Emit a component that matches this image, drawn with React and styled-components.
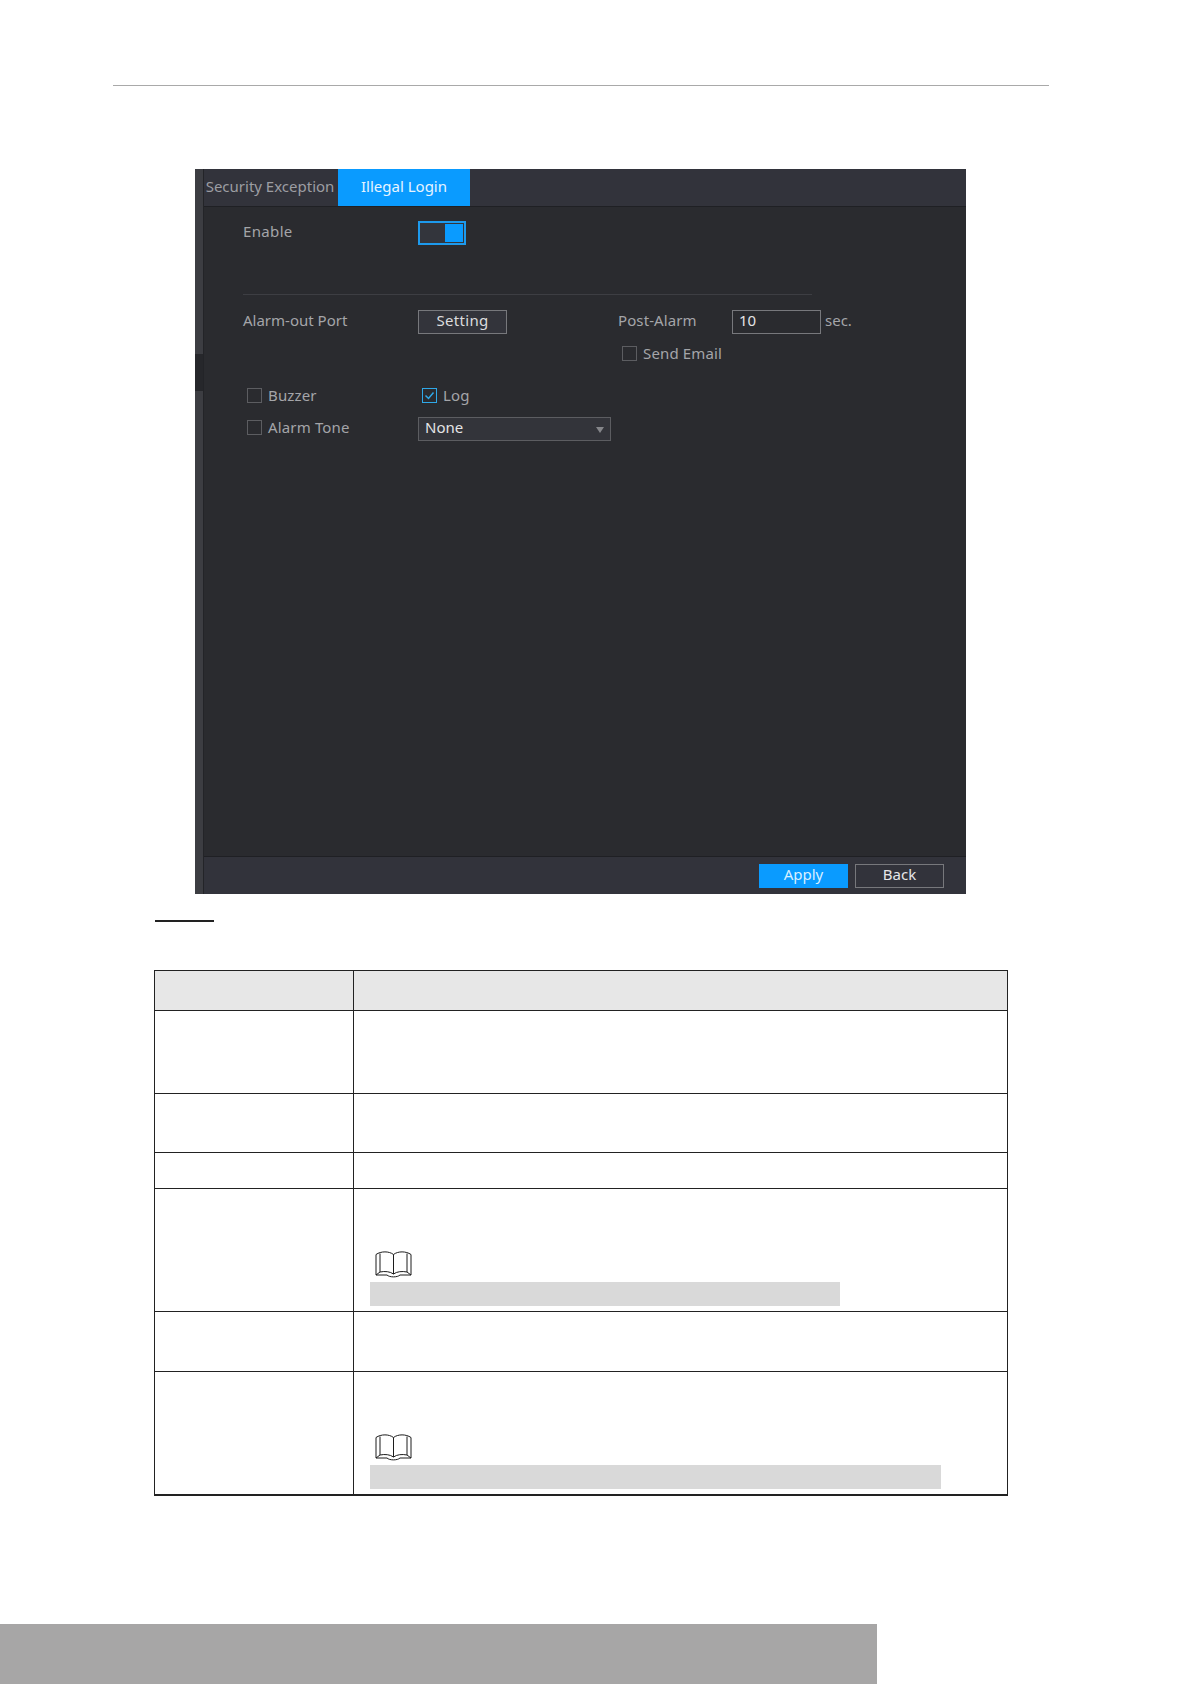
import styled, { createGlobalStyle } from "styled-components";

const GlobalStyle = createGlobalStyle`
  html, body {
    margin: 0;
    padding: 0;
    background: #fff;
  }
  * {
    box-sizing: border-box;
  }
`;

const BookIcon = () => (
    <BookSvg viewBox="0 0 37 27" fill="none" stroke="#1c1c1c" strokeWidth="1">
        <path d="M1 3.5C6 0 14 0 18.5 3.5C23 0 31 0 36 3.5V24H25C22.5 26.5 14.5 26.5 12 24H1Z" />
        <path d="M18.5 3.5V23" />
        <path d="M5 2.5V21" />
        <path d="M32 2.5V21" />
        <path d="M1 24L5 21C10 20 15 20.5 18.5 23C22 20.5 27 20 32 21L36 24" />
    </BookSvg>
);

const App = () => {
    return(<>
        <GlobalStyle />
        <Page>
            <HeaderRule />

            <Panel>
                <Strip><StripTick /></Strip>
                <Main>
                    <TabBar>
                        <Tab>Security Exception</Tab>
                        <Tab $active>Illegal Login</Tab>
                    </TabBar>

                    <Body>
                        <Row $top={14}>
                            <Label>Enable</Label>
                            <Toggle><Knob /></Toggle>
                        </Row>

                        <Divider />

                        <Row $top={15}>
                            <Label $tight>Alarm-out Port</Label>
                            <SettingButton>Setting</SettingButton>
                            <PostLabel>Post-Alarm</PostLabel>
                            <NumberBox>10</NumberBox>
                            <Unit>sec.</Unit>
                        </Row>

                        <Row $top={9} $indent={375}>
                            <CheckField>
                                <CheckBox />
                                Send Email
                            </CheckField>
                        </Row>

                        <Row $top={18}>
                            <CheckField $width={175}>
                                <CheckBox />
                                Buzzer
                            </CheckField>
                            <CheckField>
                                <CheckBox $checked>
                                    <svg width="13" height="13" viewBox="0 0 13 13" fill="none" stroke="#2fa8e8" strokeWidth="1.5">
                                        <path d="M2.5 6.5L5.5 9.5L10.5 3.5" />
                                    </svg>
                                </CheckBox>
                                Log
                            </CheckField>
                        </Row>

                        <Row $top={8}>
                            <CheckField $width={175}>
                                <CheckBox />
                                Alarm Tone
                            </CheckField>
                            <Select>
                                None
                                <Arrow />
                            </Select>
                        </Row>
                    </Body>

                    <ActionBar>
                        <ApplyButton>Apply</ApplyButton>
                        <BackButton>Back</BackButton>
                    </ActionBar>
                </Main>
            </Panel>

            <StepRule />

            <Table>
                <colgroup>
                    <col style={{ width: 199 }} />
                    <col />
                </colgroup>
                <tbody>
                    <HeadRow>
                        <th />
                        <th />
                    </HeadRow>
                    <DataRow $height={83}><td /><td /></DataRow>
                    <DataRow $height={59}><td /><td /></DataRow>
                    <DataRow $height={36}><td /><td /></DataRow>
                    <DataRow $height={123}>
                        <td />
                        <NoteCell>
                            <NoteBlock>
                                <BookIcon />
                                <NoteBar $width={470} />
                            </NoteBlock>
                        </NoteCell>
                    </DataRow>
                    <DataRow $height={60}><td /><td /></DataRow>
                    <DataRow $height={123}>
                        <td />
                        <NoteCell>
                            <NoteBlock>
                                <BookIcon />
                                <NoteBar $width={571} />
                            </NoteBlock>
                        </NoteCell>
                    </DataRow>
                </tbody>
            </Table>

            <FootBand />
        </Page>
    </>)
}

const Page = styled.div`
    width: 1191px;
    height: 1684px;
    padding-top: 85px;
    background: #fff;
    overflow: hidden;
`;

const HeaderRule = styled.div`
    width: 936px;
    height: 1px;
    margin-left: 113px;
    background: #a9a9a9;
`;

const Panel = styled.div`
    display: flex;
    width: 771px;
    height: 725px;
    margin: 83px 0 0 195px;
    background: #2a2b2f;
    font-family: "Noto Sans", sans-serif;
    font-size: 15px;
`;

const Strip = styled.div`
    width: 9px;
    background: #3c3d42;
    border-right: 1px solid #232428;
`;

const StripTick = styled.div`
    width: 8px;
    height: 37px;
    margin-top: 185px;
    background: #26272b;
`;

const Main = styled.div`
    flex: 1;
    display: flex;
    flex-direction: column;
`;

const TabBar = styled.div`
    display: flex;
    height: 38px;
    background: #32333b;
    border-bottom: 1px solid #1f2024;
`;

const Tab = styled.div`
    display: flex;
    align-items: center;
    justify-content: center;
    width: ${(props) => (props.$active ? "132px" : "134px")};
    height: 37px;
    padding: 0 ${(props) => (props.$active ? "0" : "2px")} 4px 0;
    white-space: nowrap;
    color: ${(props) => (props.$active ? "#e6f4ff" : "#9c9da2")};
    background: ${(props) => (props.$active ? "#0a9bff" : "transparent")};
`;

const Body = styled.div`
    flex: 1;
    padding-left: 39px;
`;

const Row = styled.div`
    display: flex;
    align-items: center;
    height: 24px;
    margin-top: ${(props) => props.$top}px;
    padding-left: ${(props) => props.$indent || 0}px;
    color: #a4a5a9;
`;

const Label = styled.div`
    width: 175px;
    letter-spacing: ${(props) => (props.$tight ? "0" : "0.35px")};
    padding-bottom: 4px;
`;

const Toggle = styled.div`
    display: flex;
    justify-content: flex-end;
    align-items: center;
    width: 48px;
    height: 24px;
    padding-right: 1px;
    background: #33353c;
    border: 2px solid #1d9aed;
`;

const Knob = styled.div`
    width: 18px;
    height: 18px;
    background: #0a9bff;
`;

const Divider = styled.div`
    width: 569px;
    height: 1px;
    margin-top: 49px;
    background: #3d3e43;
`;

const SettingButton = styled.div`
    display: flex;
    align-items: center;
    justify-content: center;
    width: 89px;
    height: 24px;
    padding-bottom: 4px;
    color: #dcdcde;
    background: #33343b;
    border: 1px solid #77787c;
    letter-spacing: 0.3px;
`;

const PostLabel = styled.div`
    width: 114px;
    margin-left: 111px;
    letter-spacing: 0.1px;
    padding-bottom: 4px;
`;

const NumberBox = styled.div`
    display: flex;
    align-items: center;
    width: 89px;
    height: 24px;
    padding: 0 0 4px 6px;
    color: #e4e4e6;
    border: 1px solid #77787c;
`;

const Unit = styled.div`
    margin-left: 4px;
    padding-bottom: 4px;
`;

const CheckField = styled.div`
    display: flex;
    align-items: center;
    width: ${(props) => (props.$width ? `${props.$width}px` : "auto")};
    padding: 0 0 5px 4px;
    letter-spacing: 0.15px;
    white-space: nowrap;
`;

const CheckBox = styled.div`
    display: flex;
    align-items: center;
    justify-content: center;
    width: 15px;
    height: 15px;
    margin: 2px 6px 0 0;
    border: 1px solid ${(props) => (props.$checked ? "#2fa8e8" : "#5c5d61")};
`;

const Select = styled.div`
    position: relative;
    display: flex;
    align-items: center;
    width: 193px;
    height: 24px;
    padding: 0 0 4px 6px;
    color: #e4e4e6;
    background: #33343a;
    border: 1px solid #5c5d61;
`;

const Arrow = styled.div`
    position: absolute;
    right: 6px;
    top: 9px;
    border-left: 4px solid transparent;
    border-right: 4px solid transparent;
    border-top: 6px solid #85868a;
`;

const ActionBar = styled.div`
    display: flex;
    align-items: center;
    justify-content: flex-end;
    gap: 7px;
    height: 38px;
    padding-right: 22px;
    background: #32333b;
    border-top: 1px solid #1f2024;
`;

const ApplyButton = styled.div`
    display: flex;
    align-items: center;
    justify-content: center;
    width: 89px;
    height: 24px;
    padding-bottom: 3px;
    color: #d8efff;
    background: #0a9bff;
`;

const BackButton = styled(ApplyButton)`
    color: #e6e6e8;
    background: transparent;
    border: 1px solid #77787c;
`;

const StepRule = styled.div`
    width: 59px;
    height: 2px;
    margin: 26px 0 0 155px;
    background: #222;
`;

const Table = styled.table`
    width: 854px;
    height: 525px;
    margin: 48px 0 0 154px;
    border-collapse: collapse;
    table-layout: fixed;

    th, td {
        padding: 0;
        border: 1px solid #222;
    }
`;

const HeadRow = styled.tr`
    height: 40px;

    th {
        background: #e7e7e7;
    }
`;

const DataRow = styled.tr`
    height: ${(props) => props.$height}px;

    &:last-child td {
        border-bottom-width: 2px;
    }
`;

const NoteCell = styled.td`
    vertical-align: bottom;
`;

const NoteBlock = styled.div`
    display: flex;
    flex-direction: column;
    padding: 0 0 5px 16px;
`;

const BookSvg = styled.svg`
    width: 37px;
    height: 27px;
    margin: 0 0 4px 5px;
`;

const NoteBar = styled.div`
    width: ${(props) => props.$width}px;
    height: 24px;
    background: #d9d9d9;
`;

const FootBand = styled.div`
    width: 877px;
    height: 61px;
    margin-top: 128px;
    background: #a7a6a6;
`;

export default App;
